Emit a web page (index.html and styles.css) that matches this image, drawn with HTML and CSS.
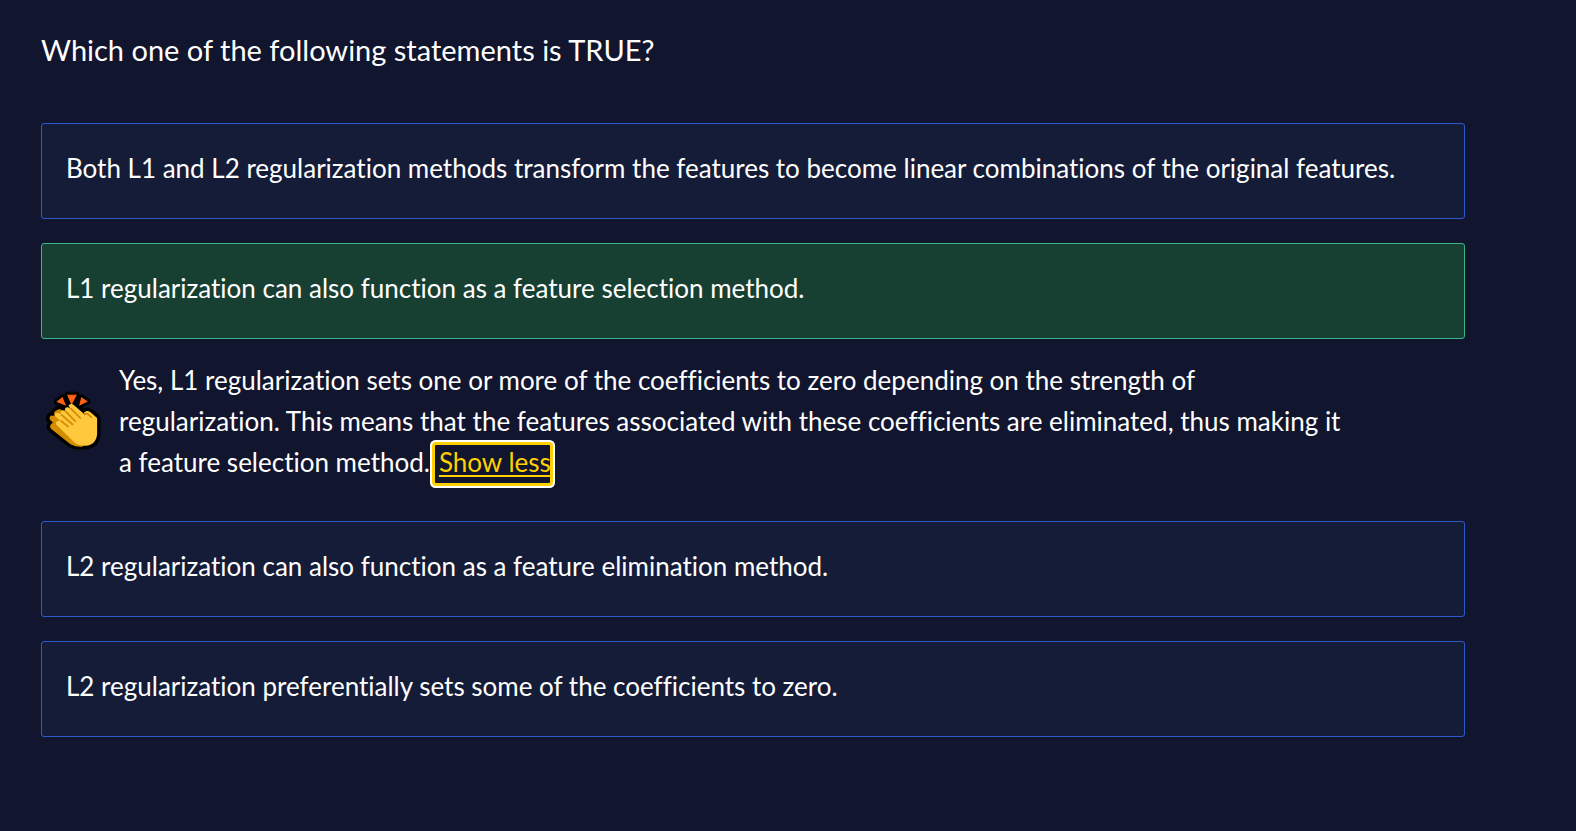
FILE: index.html
```html
<!DOCTYPE html>
<html lang="en">
<head>
<meta charset="utf-8">
<meta name="viewport" content="width=device-width, initial-scale=1">
<title>Regularization quiz</title>
<link rel="stylesheet" href="styles.css">
</head>
<body>
<main class="quiz">
  <h1 class="question">Which one of the following statements is TRUE?</h1>
  <div class="options">
    <button class="option" type="button">Both L1 and L2 regularization methods transform the features to become linear combinations of the original features.</button>
    <button class="option option-correct" type="button">L1 regularization can also function as a feature selection method.</button>
    <div class="feedback">
      <svg class="clap" viewBox="30 30 168 174" aria-hidden="true">
        <g class="clap-outline">
          <path d="M66 64 80 53 88 73zM96 45H120L107 70zM136 53 151 63 131 73z"/>
          <path d="M98 75Q105 67 114 74L145 101Q141 94 147 92Q153 89 161 94L181 111V158Q178 192 141 192Q119 195 104 187L49 144Q42 138 46 131L53 124 45 117Q40 110 47 105L59 104Q53 97 60 91Q65 86 75 85L81 83Q86 76 98 82z"/>
        </g>
        <path class="clap-spark" d="M66 64 80 53 88 73zM96 45H120L107 70zM136 53 151 63 131 73z"/>
        <path class="clap-back" d="M59 104Q53 97 60 91Q65 86 75 85L141 194Q119 196 104 187L49 144Q42 138 46 131L53 124 45 117Q40 110 47 105z"/>
        <path class="clap-front" d="M98 75Q105 67 114 74L145 101Q141 94 147 92Q153 89 161 94L181 111V158Q178 192 141 192Q126 191 116 183L66 134Q58 127 64 122Q68 118 75 120L60 107Q55 99 63 97Q70 95 77 100L75 92Q79 86 87 90L89 82Q94 77 103 84z"/>
        <path class="clap-crease" d="M77 120 97 136M78 102 110 130M89 91 118 121M105 84 132 111M145 101Q150 96 157 102L164 109"/>
      </svg>
      <p class="feedback-text">Yes, L1 regularization sets one or more of the coefficients to zero depending on the strength of regularization. This means that the features associated with these coefficients are eliminated, thus making it a feature selection method.<button class="toggle" type="button">Show less</button></p>
    </div>
    <button class="option" type="button">L2 regularization can also function as a feature elimination method.</button>
    <button class="option" type="button">L2 regularization preferentially sets some of the coefficients to zero.</button>
  </div>
</main>
</body>
</html>
```
FILE: styles.css
```css
* {
  box-sizing: border-box;
}

body {
  margin: 0;
  background: #11152e;
  color: #fff;
  font-family: Lato, "Open Sans", sans-serif;
  font-size: 26px;
  font-variant-ligatures: none;
  line-height: 41px;
}

.quiz {
  padding: 28px 111px 40px 41px;
}

.question {
  margin: 0 0 51px;
  font-size: 29px;
  font-weight: 400;
  line-height: 44px;
}

.options {
  display: flex;
  flex-direction: column;
  gap: 24px;
}

.option {
  min-height: 96px;
  padding: 24px 24px 29px;
  border: 1px solid #2b5bcb;
  border-radius: 3px;
  background: #151c38;
  color: inherit;
  font: inherit;
  font-variant-ligatures: inherit;
  text-align: left;
  cursor: pointer;
}

.option-correct {
  border-color: #3eb489;
  background: #184032;
}

.feedback {
  display: flex;
  align-items: center;
  gap: 16px;
  margin-top: -3px;
  padding: 0 112px 13px 4px;
}

.clap {
  flex: none;
  width: 58px;
  height: 60px;
  margin-bottom: 4px;
}

.clap-outline {
  fill: #000;
  stroke: #000;
  stroke-width: 20;
  stroke-linejoin: round;
}

.clap-spark {
  fill: #ff6412;
  stroke: #ff6412;
  stroke-width: 3;
}

.clap-back {
  fill: #d48c00;
}

.clap-front {
  fill: #ffc83d;
}

.clap-crease {
  fill: none;
  stroke: #d48c00;
  stroke-width: 5;
  stroke-linecap: round;
}

.feedback-text {
  margin: 0;
}

.toggle {
  margin: 0 0 0 4px;
  padding: 0 0 4px 5px;
  border: 0;
  border-radius: 2px;
  outline: 3px solid #ffd000;
  outline-offset: -1px;
  box-shadow: 0 0 0 4px #fff;
  background: #11152e;
  color: #ffd000;
  font: inherit;
  line-height: 36px;
  text-decoration: underline;
  text-decoration-thickness: 2px;
  text-underline-offset: 3px;
  cursor: pointer;
}
```
